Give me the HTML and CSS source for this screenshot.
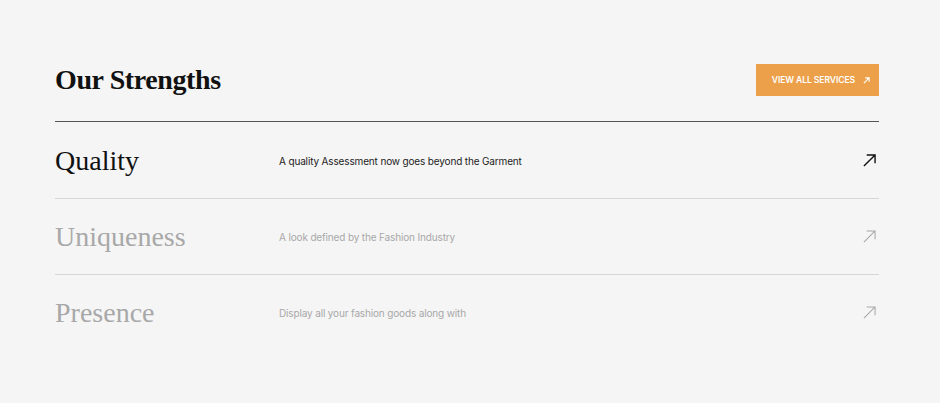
FILE: index.html
```html
<!DOCTYPE html>
<html lang="en">
<head>
    <meta charset="UTF-8">
    <meta name="viewport" content="width=device-width, initial-scale=1.0">
    <title>Our Strengths</title>
    <link rel="stylesheet" href="styles.css">
</head>
<body>
    <section class="strengths">
        <!-- Header -->
        <div class="strengths-head">
            <h2>Our Strengths</h2>
            <a class="btn-services" href="#">
                VIEW ALL SERVICES
                <svg width="7" height="7" viewBox="0 0 8 8"><path d="M1 7L7 1M2.5 1H7V5.5" fill="none" stroke="currentColor" stroke-width="1.3"/></svg>
            </a>
        </div>

        <!-- Rows -->
        <ul class="strength-list">
            <li class="strength active">
                <span class="strength-title">Quality</span>
                <span class="strength-desc">A quality Assessment now goes beyond the Garment</span>
                <svg class="strength-arrow" width="13" height="13" viewBox="0 0 14 14"><path d="M1 13L13 1M4 1H13V10" fill="none" stroke="currentColor" stroke-width="1.5"/></svg>
            </li>
            <li class="strength">
                <span class="strength-title">Uniqueness</span>
                <span class="strength-desc">A look defined by the Fashion Industry</span>
                <svg class="strength-arrow" width="13" height="13" viewBox="0 0 14 14"><path d="M1 13L13 1M4 1H13V10" fill="none" stroke="currentColor" stroke-width="1.1"/></svg>
            </li>
            <li class="strength">
                <span class="strength-title">Presence</span>
                <span class="strength-desc">Display all your fashion goods along with</span>
                <svg class="strength-arrow" width="13" height="13" viewBox="0 0 14 14"><path d="M1 13L13 1M4 1H13V10" fill="none" stroke="currentColor" stroke-width="1.1"/></svg>
            </li>
        </ul>
    </section>
</body>
</html>
```

FILE: styles.css
```css
body {
    margin: 0;
    background: #f5f5f5;
    font-family: Inter, "Liberation Sans", sans-serif;
    color: #111;
}
.strengths {
    width: 824px;
    margin-left: 55px;
    padding-top: 64px;
}
.strengths-head {
    display: flex;
    justify-content: space-between;
    align-items: center;
    padding-bottom: 25px;
    border-bottom: 1px solid #555;
}
.strengths-head h2 {
    margin: 0;
    font-family: "Liberation Serif", serif;
    font-weight: bold;
    font-size: 28px;
    letter-spacing: -0.4px;
    color: #111;
}
.btn-services {
    display: flex;
    align-items: center;
    gap: 8px;
    height: 32px;
    padding: 0 9px 0 16px;
    background: #eca04a;
    color: #fff;
    font-size: 8.6px;
    font-weight: 600;
    text-decoration: none;
    letter-spacing: -0.1px;
}
.strength-list {
    list-style: none;
    margin: 1px 0 0;
    padding: 0;
}
.strength {
    display: flex;
    align-items: center;
    height: 75px;
    border-bottom: 1px solid #d6d6d6;
    color: #a8a8a8;
}
.strength:last-child {
    border-bottom: none;
}
.strength.active {
    color: #111;
}
.strength-title {
    width: 224px;
    font-family: "Liberation Serif", serif;
    font-size: 28px;
}
.strength-desc {
    flex: 1;
    font-size: 10px;
    letter-spacing: -0.15px;
}
.strength.active .strength-desc {
    color: #222;
}
.strength-arrow {
    margin-right: 3px;
}
```
